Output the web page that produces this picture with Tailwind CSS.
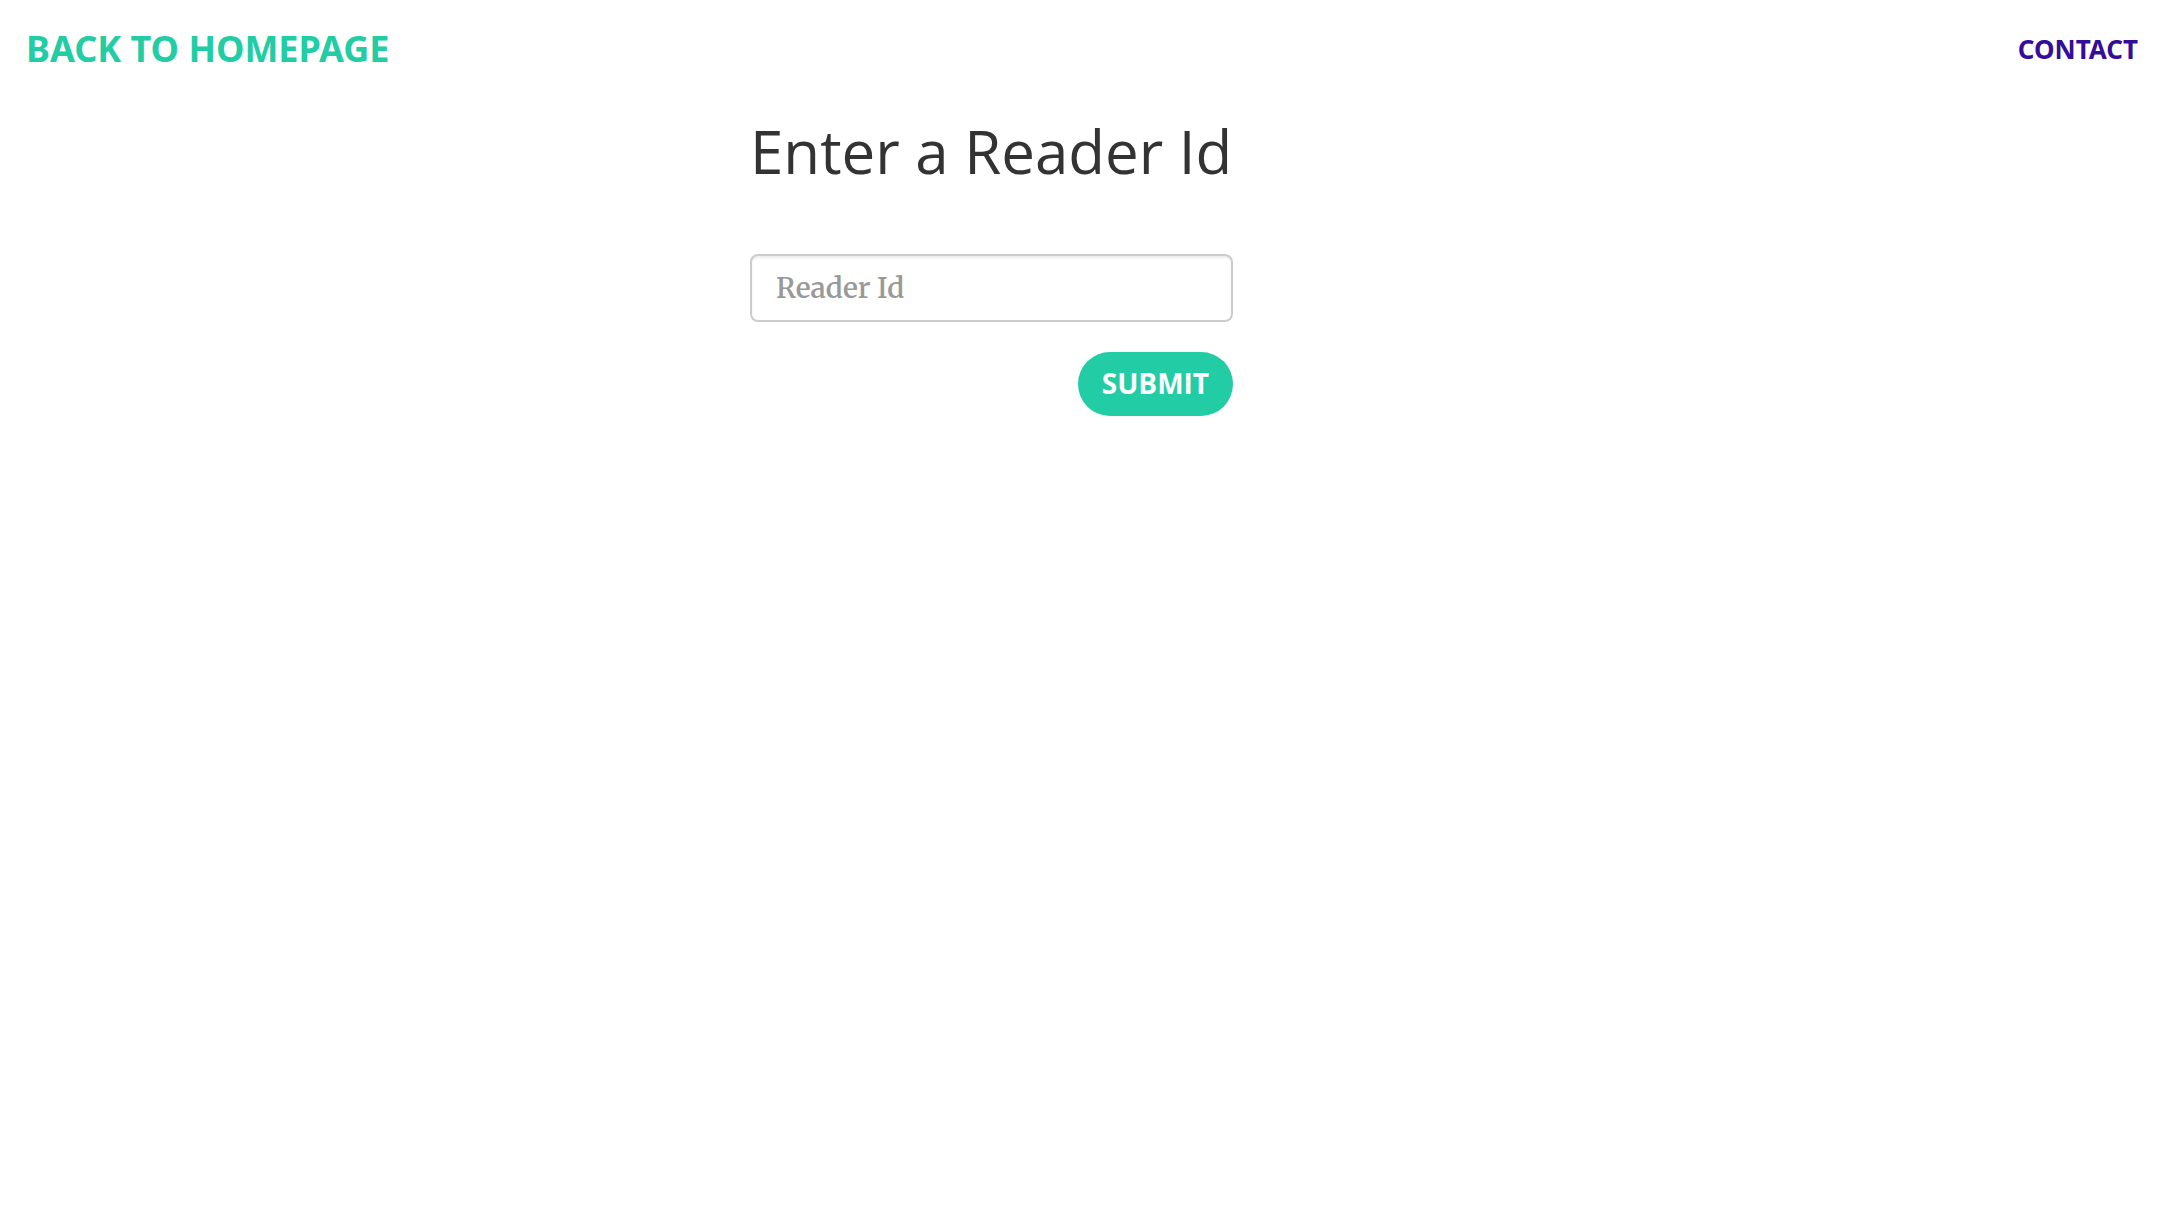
<!DOCTYPE html>
<html lang="en">
<head>
<meta charset="utf-8">
<title>Enter a Reader Id</title>
<script src="https://cdn.jsdelivr.net/npm/@tailwindcss/browser@4"></script>
</head>
<body class="bg-white font-['Open_Sans',sans-serif] text-[#333333]">
<header class="flex h-[98px] items-center justify-between px-[26px] font-['Noto_Sans','Open_Sans',sans-serif] font-bold">
<a href="#" class="text-[36px] leading-[40px] text-[#22cca5]">BACK TO HOMEPAGE</a>
<a href="#" class="text-[26px] leading-[40px] text-[#340d99]">CONTACT</a>
</header>
<main class="px-[34.66%]">
<h1 class="mt-5 text-[60px] leading-[66px] whitespace-nowrap">Enter a Reader Id</h1>
<form class="mt-[70px] flex w-[483px] flex-col items-end">
<input type="text" aria-label="Reader Id" placeholder="Reader Id" class="h-[68px] w-full rounded-[8px] border-2 border-[#cccccc] px-6 font-['Merriweather','Noto_Serif',serif] text-[28px] font-semibold shadow-[inset_0_2px_2px_rgba(0,0,0,0.075)] placeholder:text-[#999999]">
<button type="button" class="mt-[30px] h-[64px] rounded-full bg-[#22cca5] px-6 pb-[2px] text-[28px] font-bold text-white">SUBMIT</button>
</form>
</main>
</body>
</html>
